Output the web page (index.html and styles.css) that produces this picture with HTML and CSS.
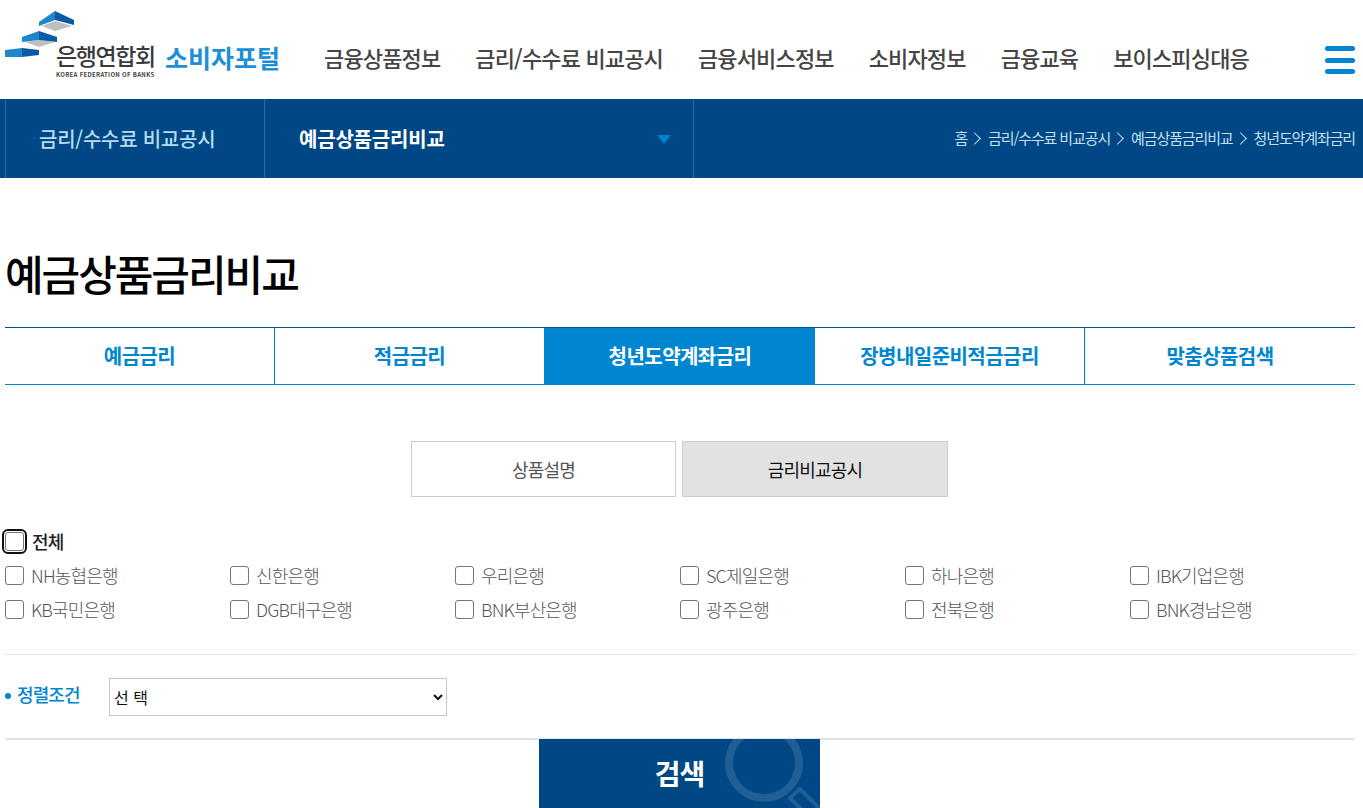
FILE: index.html
```html
<!DOCTYPE html>
<html lang="ko">
<head>
<meta charset="utf-8">
<title>예금상품금리비교</title>
<link rel="stylesheet" href="styles.css">
</head>
<body>
<header class="header">
  <a class="logo">
    <svg class="logo-mark" width="76" height="60" viewBox="0 0 76 60">
      <polygon points="42,26 55,21 72,26 55,31" fill="#bdbfc1"/>
      <polygon points="39,22 55,11 55,20 39,26" fill="#1f86cc"/>
      <polygon points="55,11 74,20 74,25 55,20" fill="#0b5aa5"/>
      <polygon points="25,42 39,40 55,42 39,47" fill="#bdbfc1"/>
      <polygon points="22,37 39,31 39,40 22,42" fill="#1f86cc"/>
      <polygon points="39,31 57,37 57,42 39,40" fill="#0b5aa5"/>
      <polygon points="5,50 22,48 22,57 5,57" fill="#1f86cc"/>
      <polygon points="22,48 39,50 39,55 22,57" fill="#0b5aa5"/>
    </svg>
    <span class="logo-org">
      <span class="logo-name">은행연합회</span>
      <span class="logo-en">KOREA FEDERATION OF BANKS</span>
    </span>
    <span class="logo-portal">소비자포털</span>
  </a>
  <nav class="gnb">
    <a>금융상품정보</a>
    <a>금리/수수료 비교공시</a>
    <a>금융서비스정보</a>
    <a>소비자정보</a>
    <a>금융교육</a>
    <a>보이스피싱대응</a>
  </nav>
  <button class="menu" aria-label="메뉴"><i></i><i></i><i></i></button>
</header>

<div class="subbar">
  <div class="sub-first">금리/수수료 비교공시</div>
  <div class="sub-second">예금상품금리비교<span class="caret"></span></div>
  <div class="crumbs">
    <span>홈</span><i></i><span>금리/수수료 비교공시</span><i></i><span>예금상품금리비교</span><i></i><span>청년도약계좌금리</span>
  </div>
</div>

<main class="main">
  <h1 class="title">예금상품금리비교</h1>

  <div class="tabs">
    <a class="tab">예금금리</a>
    <a class="tab">적금금리</a>
    <a class="tab active">청년도약계좌금리</a>
    <a class="tab">장병내일준비적금금리</a>
    <a class="tab">맞춤상품검색</a>
  </div>

  <div class="subtabs">
    <a class="subtab">상품설명</a>
    <a class="subtab on">금리비교공시</a>
  </div>

  <label class="all"><input type="checkbox" class="check focus"><span>전체</span></label>
  <div class="banks">
    <label class="bank"><input type="checkbox" class="check"><span>NH농협은행</span></label>
    <label class="bank"><input type="checkbox" class="check"><span>신한은행</span></label>
    <label class="bank"><input type="checkbox" class="check"><span>우리은행</span></label>
    <label class="bank"><input type="checkbox" class="check"><span>SC제일은행</span></label>
    <label class="bank"><input type="checkbox" class="check"><span>하나은행</span></label>
    <label class="bank"><input type="checkbox" class="check"><span>IBK기업은행</span></label>
    <label class="bank"><input type="checkbox" class="check"><span>KB국민은행</span></label>
    <label class="bank"><input type="checkbox" class="check"><span>DGB대구은행</span></label>
    <label class="bank"><input type="checkbox" class="check"><span>BNK부산은행</span></label>
    <label class="bank"><input type="checkbox" class="check"><span>광주은행</span></label>
    <label class="bank"><input type="checkbox" class="check"><span>전북은행</span></label>
    <label class="bank"><input type="checkbox" class="check"><span>BNK경남은행</span></label>
  </div>

  <div class="sort">
    <span class="sort-label">정렬조건</span>
    <select class="sort-select"><option>선 택</option></select>
  </div>

  <div class="actions">
    <button class="search">검색
      <svg class="search-icon" width="100" height="69" viewBox="0 0 100 69">
        <circle cx="44" cy="24" r="35" fill="none" stroke="#fff" stroke-opacity=".13" stroke-width="8"/>
        <path d="M80 50L70 59L115 104L125 95Z" fill="none" stroke="#fff" stroke-opacity=".13" stroke-width="4"/>
      </svg>
    </button>
  </div>
</main>
</body>
</html>
```
FILE: styles.css
```css
* { box-sizing: border-box; }
html, body { margin: 0; height: 808px; overflow: hidden; background: #fff; }
body { font-family: "Noto Sans CJK KR", "Noto Sans", sans-serif; color: #333; }
a { color: inherit; text-decoration: none; }

.header { height: 99px; display: flex; align-items: flex-start; position: relative; }
.logo { display: flex; width: 319px; height: 99px; padding-left: 5px; position: relative; }
.logo-mark { position: absolute; left: 0; top: 0; }
.logo-org { margin: 40px 0 0 51px; width: 109px; display: flex; flex-direction: column; }
.logo-name { height: 30px; font-size: 23px; line-height: 30px; font-weight: 500; letter-spacing: -1.4px; color: #3a3a3a; white-space: nowrap; }
.logo-en { font-size: 6px; line-height: 9px; font-weight: 700; color: #444; letter-spacing: .3px; white-space: nowrap; }
.logo-portal { margin-top: 39px; font-size: 25px; line-height: 36px; font-weight: 700; color: #1c8fd6; letter-spacing: 0; }
.gnb { display: flex; gap: 35px; margin: 41px 0 0 5px; font-size: 22px; line-height: 32px; font-weight: 500; letter-spacing: -.85px; color: #444; white-space: nowrap; }
.menu { position: absolute; left: 1325px; top: 46px; width: 30px; height: 28px; padding: 0; border: 0; background: none; display: flex; flex-direction: column; justify-content: space-between; }
.menu i { display: block; height: 5px; border-radius: 3px; background: #0086d1; }

.subbar { height: 79px; background: #004785; display: flex; align-items: center; padding-left: 5px; color: #fff; }
.sub-first { width: 259px; height: 100%; border-left: 1px solid #2f6a9f; padding-left: 33px; font-size: 20px; line-height: 79px; font-weight: 500; letter-spacing: -.25px; color: #b7dcf0; white-space: nowrap; }
.sub-second { width: 430px; height: 100%; border-left: 1px solid #2f6a9f; border-right: 1px solid #2f6a9f; padding-left: 34px; font-size: 20px; line-height: 79px; font-weight: 700; letter-spacing: -.2px; position: relative; }
.caret { position: absolute; left: 392px; top: 36px; border: 7px solid transparent; border-top: 9px solid #0086d1; border-bottom: 0; }
.crumbs { flex: 1; display: flex; align-items: center; justify-content: flex-end; padding: 0 8px 2px 0; font-size: 15px; letter-spacing: -1.12px; color: #c4e0f0; white-space: nowrap; }
.crumbs i { flex: none; width: 9px; height: 9px; margin: 2px 9px 0 3px; border-top: 1px solid #c4e0f0; border-right: 1px solid #c4e0f0; transform: rotate(45deg); }

.main { padding: 0 8px 0 5px; }
.title { margin: 65px 0 0; height: 84px; font-size: 42px; line-height: 60px; font-weight: 500; letter-spacing: -2.05px; color: #000; }

.tabs { display: flex; height: 58px; border-top: 1px solid #00508f; border-bottom: 1px solid #0086d1; }
.tab { width: 270px; border-right: 1px solid #0086d1; text-align: center; font-size: 20px; line-height: 56px; font-weight: 700; letter-spacing: -.55px; color: #0086d1; }
.tab:last-child { border-right: 0; }
.tab.active { background: #0086d1; color: #fff; border-right: 0; }

.subtabs { display: flex; justify-content: center; gap: 6px; margin: 56px 0 0 -1px; }
.subtab { width: 265px; height: 56px; border: 1px solid #ccc; text-align: center; font-size: 18px; line-height: 54px; letter-spacing: -.8px; color: #555; }
.subtab.on { width: 266px; background: #e2e2e2; color: #111; }

.all { display: flex; align-items: center; margin-top: 27px; height: 34px; font-size: 18px; font-weight: 500; letter-spacing: -.9px; color: #222; }
.banks { display: grid; grid-template-columns: repeat(6, 225px); grid-auto-rows: 34px; }
.bank { display: flex; align-items: center; font-size: 18px; font-weight: 300; letter-spacing: -.85px; color: #555; white-space: nowrap; }
.check { appearance: none; -webkit-appearance: none; flex: none; width: 19px; height: 19px; margin: 0 7px 0 0; border: 1px solid #767676; border-radius: 3px; background: #fff; }
.check.focus { outline: 2px solid #101010; outline-offset: 1px; border-radius: 3px; margin-right: 8px; }

.sort { display: flex; align-items: center; height: 86px; margin-top: 28px; border-top: 1px solid #e5e5e5; border-bottom: 2px solid #e2e2e2; }
.sort-label { width: 104px; padding-left: 12px; position: relative; font-size: 18px; font-weight: 500; letter-spacing: -.9px; color: #0086d1; top: -3px; }
.sort-label::before { content: ""; position: absolute; left: 0; top: 12px; width: 6px; height: 6px; border-radius: 50%; background: #0086d1; }
.sort-select { width: 338px; height: 38px; padding: 0; border: 1px solid #c4c4c4; border-radius: 0; background: #fff; font-family: inherit; font-size: 16px; color: #111; }

.actions { display: flex; justify-content: center; margin: -1px 0 0 -1px; }
.search { position: relative; width: 281px; height: 69px; padding: 0 0 2px; border: 0; overflow: hidden; background: #004785; color: #fff; font-family: inherit; font-size: 28px; font-weight: 700; letter-spacing: -1px; }
.search-icon { position: absolute; left: 181px; top: 0; }
```
